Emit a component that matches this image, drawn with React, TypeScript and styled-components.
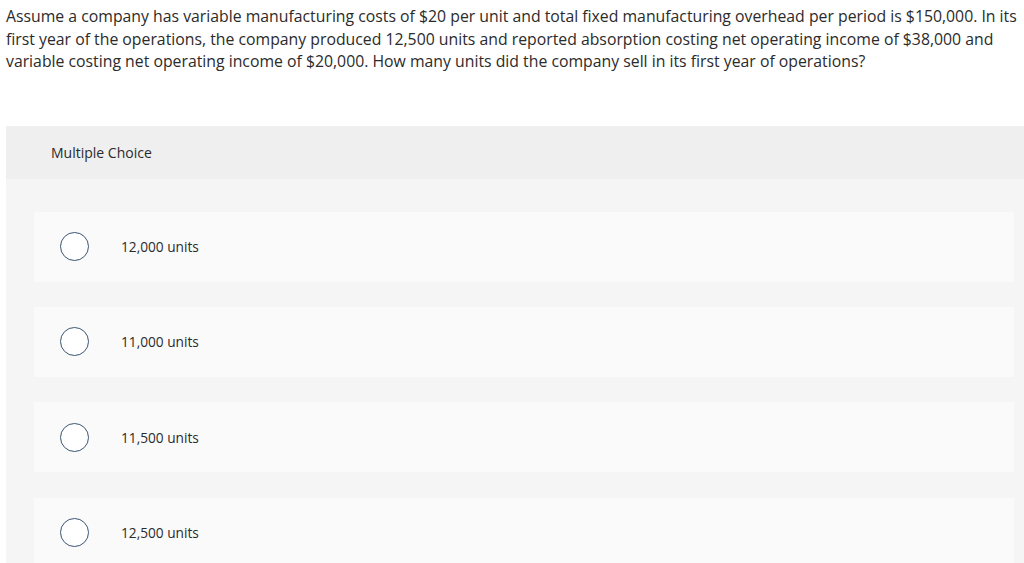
import styled, { createGlobalStyle } from 'styled-components';

const GlobalStyle = createGlobalStyle`
  html, body {
    margin: 0;
    padding: 0;
    background: #ffffff;
  }
  body {
    font-family: "Open Sans", Arial, sans-serif;
    color: #2b2b2b;
    overflow: hidden;
  }
`;

const Page = styled.div`
  width: 1024px;
  height: 563px;
  overflow: hidden;
  padding-left: 6px;
  box-sizing: border-box;
`;

const Question = styled.p`
  margin: 0;
  padding: 5px 0 0 0;
  font-size: 15.8px;
  line-height: 22.5px;
  white-space: nowrap;
  color: #2b2b2b;
`;

const Panel = styled.section`
  margin-top: 53px;
  background: #f5f5f5;
`;

const PanelHeader = styled.div`
  height: 53px;
  background: #efefef;
  display: flex;
  align-items: center;
  padding-left: 45px;
  font-size: 14px;
  color: #2b2b2b;
`;

const Choices = styled.div`
  display: flex;
  flex-direction: column;
  gap: 25.4px;
  padding: 33px 10px 20px 28px;
`;

const Choice = styled.label`
  height: 70px;
  background: #fafafa;
  display: flex;
  align-items: center;
  padding-left: 26px;
  font-size: 13.7px;
  color: #2b2b2b;
  cursor: pointer;
`;

const Radio = styled.span`
  width: 27px;
  height: 27px;
  border: 1.3px solid #3a5573;
  border-radius: 50%;
  background: #ffffff;
  flex: none;
`;

const ChoiceText = styled.span`
  margin-left: 32px;
`;

const choices = ['12,000 units', '11,000 units', '11,500 units', '12,500 units'];

export default function App() {
  return (
    <Page>
      <GlobalStyle />
      <Question>
        Assume a company has variable manufacturing costs of $20 per unit and total fixed manufacturing overhead per
        period is $150,000. In its
        <br />
        first year of the operations, the company produced 12,500 units and reported absorption costing net operating
        income of $38,000 and
        <br />
        variable costing net operating income of $20,000. How many units did the company sell in its first year of
        operations?
      </Question>
      <Panel>
        <PanelHeader>Multiple Choice</PanelHeader>
        <Choices>
          {choices.map((c) => (
            <Choice key={c}>
              <Radio />
              <ChoiceText>{c}</ChoiceText>
            </Choice>
          ))}
        </Choices>
      </Panel>
    </Page>
  );
}
